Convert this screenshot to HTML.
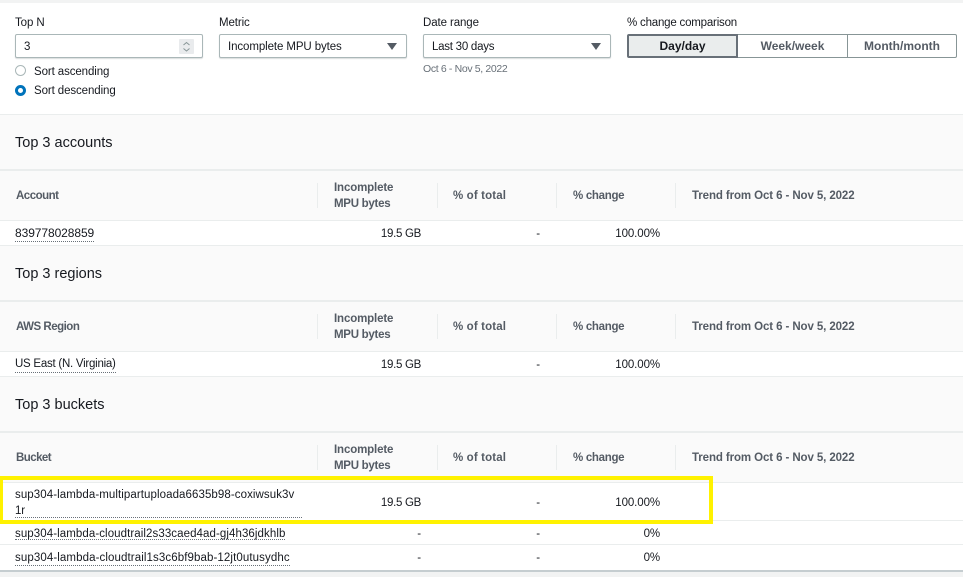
<!DOCTYPE html>
<html><head><meta charset="utf-8"><style>
html,body{margin:0;padding:0}
body{width:963px;height:577px;overflow:hidden;position:relative;background:#f2f3f3;font-family:"Liberation Sans",sans-serif;font-size:11.5px;letter-spacing:-.1px;color:#16191f}
div{position:absolute;white-space:nowrap}
#w{left:0;top:0;width:963px;height:577px;filter:blur(.3px)}
.t{line-height:16px;height:16px}
.h{font-weight:bold;color:#545b64;line-height:16px}
.r{text-align:right}
.sep{width:1px;background:#eaeded}
.dot{border-bottom:1px dotted #687078;height:15px;line-height:15px}
.box{box-sizing:border-box;border:1px solid #aab7b8;border-radius:2px;background:#fff;height:24px;box-shadow:0 1px 1px rgba(0,28,36,.15)}
.tri{width:0;height:0;border-left:5px solid transparent;border-right:5px solid transparent;border-top:7px solid #545b64}
.btn{box-sizing:border-box;height:24px;top:34px;border:1px solid #879596;background:#fff;font-weight:bold;font-size:12px;letter-spacing:0;color:#545b64;text-align:center;line-height:23px}
.st{left:15px;font-size:14.5px;letter-spacing:0;line-height:20px;color:#16191f}
</style></head><body><div id="w">
<div style="left:0;top:3px;width:963px;height:111px;background:#fff"></div>
<div class="t" style="left:15px;top:15px">Top N</div>
<div class="box" style="left:15px;top:34px;width:188px"></div>
<div class="t" style="left:24px;top:39px">3</div>
<div style="left:179px;top:39px;width:15px;height:15px;background:#e9ebed;border-radius:1px"></div>
<svg style="position:absolute;left:179px;top:39px" width="15" height="15" viewBox="0 0 15 15"><path d="M4.5 6L7.5 3.5L10.5 6M4.5 9.5L7.5 12L10.5 9.5" fill="none" stroke="#879596" stroke-width="1"/></svg>
<div style="box-sizing:border-box;left:15px;top:65px;width:11px;height:11px;border:1px solid #aab7b8;border-radius:50%;background:#fff"></div>
<div class="t" style="left:34px;top:64px">Sort ascending</div>
<div style="box-sizing:border-box;left:15px;top:85px;width:11px;height:11px;border:3px solid #0073bb;border-radius:50%;background:#fff"></div>
<div class="t" style="left:34px;top:83px">Sort descending</div>

<div class="t" style="left:219px;top:15px">Metric</div>
<div class="box" style="left:219px;top:34px;width:188px"></div>
<div class="t" style="left:228px;top:39px">Incomplete MPU bytes</div>
<div class="tri" style="left:387px;top:43px"></div>

<div class="t" style="left:423px;top:15px">Date range</div>
<div class="box" style="left:423px;top:34px;width:188px"></div>
<div class="t" style="left:432px;top:39px;letter-spacing:-.25px">Last 30 days</div>
<div class="tri" style="left:591px;top:43px"></div>
<div class="t" style="left:423px;top:61px;font-size:10.5px;letter-spacing:-.35px;color:#687078">Oct 6 - Nov 5, 2022</div>

<div class="t" style="left:627px;top:15px;letter-spacing:-.2px">% change comparison</div>
<div class="btn" style="left:737px;width:111px;">Week/week</div>
<div class="btn" style="left:847px;width:110px;border-radius:0 2px 2px 0">Month/month</div>
<div class="btn" style="left:627px;width:111px;background:#eaeded;color:#16191f;border:2px solid #687078;border-radius:2px 0 0 2px;line-height:21px">Day/day</div>

<!-- section 1 -->
<div style="left:0;top:114px;width:963px;height:1px;background:#eaeded"></div>
<div style="left:0;top:115px;width:963px;height:54px;background:#fafafa"></div>
<div class="st" style="top:133px">Top 3 accounts</div>
<div style="left:0;top:169px;width:963px;height:2px;background:#eaeded"></div>
<div style="left:0;top:171px;width:963px;height:49px;background:#fafafa"></div>
<div style="left:0;top:220px;width:963px;height:1px;background:#eaeded"></div>
<div style="left:0;top:221px;width:963px;height:24px;background:#fff"></div>
<div class="h" style="left:16px;top:188px;letter-spacing:-.5px">Account</div>
<div class="sep" style="left:317px;top:183px;height:25px"></div>
<div class="h" style="left:334px;top:180px;letter-spacing:-.14px">Incomplete</div>
<div class="h" style="left:334px;top:196px;letter-spacing:-.27px">MPU bytes</div>
<div class="sep" style="left:437px;top:183px;height:25px"></div>
<div class="h" style="left:453px;top:188px;letter-spacing:.13px">% of total</div>
<div class="sep" style="left:556px;top:183px;height:25px"></div>
<div class="h" style="left:573px;top:188px;letter-spacing:-.3px">% change</div>
<div class="sep" style="left:675px;top:183px;height:25px"></div>
<div class="h" style="left:692px;top:188px">Trend from Oct 6 - Nov 5, 2022</div>
<div class="dot" style="left:15px;top:226px;font-size:12px;letter-spacing:-.08px">839778028859</div>
<div class="t r" style="left:321px;width:100px;top:226px;letter-spacing:-.3px">19.5 GB</div>
<div class="t r" style="left:440px;width:100px;top:226px">-</div>
<div class="t r" style="left:560px;width:100px;top:226px">100.00%</div>

<!-- section 2 -->
<div style="left:0;top:245px;width:963px;height:1px;background:#eaeded"></div>
<div style="left:0;top:246px;width:963px;height:54px;background:#fafafa"></div>
<div class="st" style="top:264px">Top 3 regions</div>
<div style="left:0;top:300px;width:963px;height:2px;background:#eaeded"></div>
<div style="left:0;top:302px;width:963px;height:49px;background:#fafafa"></div>
<div style="left:0;top:351px;width:963px;height:1px;background:#eaeded"></div>
<div style="left:0;top:352px;width:963px;height:24px;background:#fff"></div>
<div class="h" style="left:16px;top:319px;letter-spacing:-.5px">AWS Region</div>
<div class="sep" style="left:317px;top:314px;height:25px"></div>
<div class="h" style="left:334px;top:311px;letter-spacing:-.14px">Incomplete</div>
<div class="h" style="left:334px;top:327px;letter-spacing:-.27px">MPU bytes</div>
<div class="sep" style="left:437px;top:314px;height:25px"></div>
<div class="h" style="left:453px;top:319px;letter-spacing:.13px">% of total</div>
<div class="sep" style="left:556px;top:314px;height:25px"></div>
<div class="h" style="left:573px;top:319px;letter-spacing:-.3px">% change</div>
<div class="sep" style="left:675px;top:314px;height:25px"></div>
<div class="h" style="left:692px;top:319px">Trend from Oct 6 - Nov 5, 2022</div>
<div class="dot" style="left:15px;top:357px;letter-spacing:-.25px">US East (N. Virginia)</div>
<div class="t r" style="left:321px;width:100px;top:357px;letter-spacing:-.3px">19.5 GB</div>
<div class="t r" style="left:440px;width:100px;top:357px">-</div>
<div class="t r" style="left:560px;width:100px;top:357px">100.00%</div>

<!-- section 3 -->
<div style="left:0;top:376px;width:963px;height:1px;background:#eaeded"></div>
<div style="left:0;top:377px;width:963px;height:54px;background:#fafafa"></div>
<div class="st" style="top:395px">Top 3 buckets</div>
<div style="left:0;top:431px;width:963px;height:2px;background:#eaeded"></div>
<div style="left:0;top:433px;width:963px;height:49px;background:#fafafa"></div>
<div style="left:0;top:482px;width:963px;height:1px;background:#eaeded"></div>
<div style="left:0;top:483px;width:963px;height:87px;background:#fff"></div>
<div class="h" style="left:16px;top:450px;letter-spacing:-.55px">Bucket</div>
<div class="sep" style="left:317px;top:445px;height:25px"></div>
<div class="h" style="left:334px;top:442px;letter-spacing:-.14px">Incomplete</div>
<div class="h" style="left:334px;top:458px;letter-spacing:-.27px">MPU bytes</div>
<div class="sep" style="left:437px;top:445px;height:25px"></div>
<div class="h" style="left:453px;top:450px;letter-spacing:.13px">% of total</div>
<div class="sep" style="left:556px;top:445px;height:25px"></div>
<div class="h" style="left:573px;top:450px;letter-spacing:-.3px">% change</div>
<div class="sep" style="left:675px;top:445px;height:25px"></div>
<div class="h" style="left:692px;top:450px">Trend from Oct 6 - Nov 5, 2022</div>
<div class="t" style="left:15px;top:487px;letter-spacing:.08px">sup304-lambda-multipartuploada6635b98-coxiwsuk3v</div>
<div class="t" style="left:15px;top:503px">1r</div>
<div style="left:15px;top:517px;width:287px;height:0;border-top:1px dotted #687078"></div>
<div class="t r" style="left:321px;width:100px;top:495px;letter-spacing:-.3px">19.5 GB</div>
<div class="t r" style="left:440px;width:100px;top:495px">-</div>
<div class="t r" style="left:560px;width:100px;top:495px">100.00%</div>
<div style="left:0;top:520px;width:963px;height:1px;background:#eaeded"></div>
<div class="dot" style="left:15px;top:526px;letter-spacing:.08px;height:13px;line-height:17px">sup304-lambda-cloudtrail2s33caed4ad-gj4h36jdkhlb</div>
<div class="t r" style="left:321px;width:100px;top:526px">-</div>
<div class="t r" style="left:440px;width:100px;top:526px">-</div>
<div class="t r" style="left:560px;width:100px;top:526px">0%</div>
<div style="left:0;top:544px;width:963px;height:1px;background:#eaeded"></div>
<div class="dot" style="left:15px;top:550px;letter-spacing:.1px;height:15px;line-height:17px">sup304-lambda-cloudtrail1s3c6bf9bab-12jt0utusydhc</div>
<div class="t r" style="left:321px;width:100px;top:550px">-</div>
<div class="t r" style="left:440px;width:100px;top:550px">-</div>
<div class="t r" style="left:560px;width:100px;top:550px">0%</div>
<div style="left:0;top:570px;width:963px;height:2px;background:#c5cdd0"></div>

<div style="box-sizing:border-box;left:-1px;top:476px;width:714px;height:48px;border:4px solid #fff200"></div>
</div></body></html>
